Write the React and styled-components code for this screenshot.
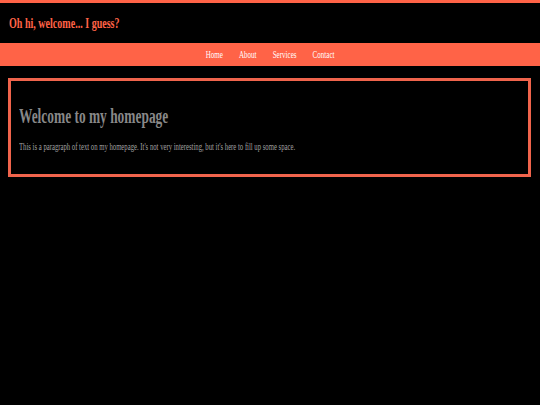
import styled, { createGlobalStyle } from "styled-components";

const GlobalStyle = createGlobalStyle`
  html, body {
    margin: 0;
    padding: 0;
    background: #000;
    min-height: 100%;
  }
  body {
    font-family: "Liberation Serif", "Times New Roman", serif;
    font-variant-ligatures: none;
  }
`;

// text in the shot is squeezed sideways
const SQUEEZE = 0.67;

const Page = styled.div`
  min-height: 405px;
  background: #000;
  border-top: 3px solid tomato;
`;

const Header = styled.header`
  padding: 11px 9px;
  height: 18px;
`;

const Title = styled.h1`
  margin: 0;
  font-size: 15px;
  line-height: 18px;
  font-weight: bold;
  color: tomato;
  display: inline-block;
  white-space: nowrap;
  transform: scaleX(${SQUEEZE});
  transform-origin: left center;
`;

const Nav = styled.nav`
  background: tomato;
  height: 23px;
  display: flex;
  justify-content: center;
`;

const NavList = styled.ul`
  list-style: none;
  margin: 0;
  padding: 0;
  display: flex;
  gap: 24px;
  transform: scaleX(${SQUEEZE});
  transform-origin: center;
`;

const NavLink = styled.a`
  color: #fff;
  text-decoration: none;
  font-size: 10.5px;
  line-height: 23px;
  white-space: nowrap;
`;

const Main = styled.main`
  padding: 12px 9px 0 8px;
`;

const Card = styled.section`
  border: 3px solid #f0644c;
  padding: 23px 8px 21px;
`;

const Heading = styled.h2`
  margin: 0;
  font-size: 20px;
  line-height: 24px;
  font-weight: bold;
  color: #888;
  display: inline-block;
  white-space: nowrap;
  transform: scaleX(${SQUEEZE});
  transform-origin: left center;
`;

const Text = styled.p`
  margin: 13px 0 0;
  font-size: 10px;
  line-height: 12px;
  color: #a0a0a0;
  white-space: nowrap;
  transform: scaleX(${SQUEEZE});
  transform-origin: left center;
`;

const links = ["Home", "About", "Services", "Contact"];

export default function App() {
  return (
    <>
      <GlobalStyle />
      <Page>
        <Header>
          <Title>Oh hi, welcome... I guess?</Title>
        </Header>
        <Nav>
          <NavList>
            {links.map((l) => (
              <li key={l}>
                <NavLink href="#">{l}</NavLink>
              </li>
            ))}
          </NavList>
        </Nav>
        <Main>
          <Card>
            <Heading>Welcome to my homepage</Heading>
            <Text>
              This is a paragraph of text on my homepage. It's not very interesting, but it's here to fill up some space.
            </Text>
          </Card>
        </Main>
      </Page>
    </>
  );
}
